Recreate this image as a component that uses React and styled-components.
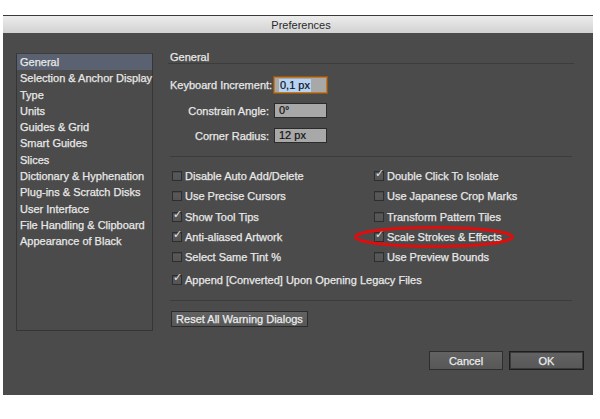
import React from "react";
import styled, { createGlobalStyle } from "styled-components";

const GlobalStyle = createGlobalStyle`
  body {
    margin: 0;
    background: #ffffff;
    font-family: "Liberation Sans", Arial, sans-serif;
  }
`;

const Window = styled.div`
  margin: 15px 0 0 3px;
  width: 590px;
  height: 380px;
  background: #4b4b4b;
  display: flex;
  flex-direction: column;
  -webkit-text-stroke: 0.25px currentColor;
`;

const TitleBar = styled.div`
  height: 17px;
  border-top: 1px solid #3a3a3a;
  background: linear-gradient(#ececec, #d2d2d2);
  display: flex;
  align-items: center;
  justify-content: center;
  font-size: 11px;
  color: #2a2a2a;
  padding-left: 6px;
  -webkit-text-stroke: 0;
`;

const Body = styled.div`
  flex: 1;
  display: grid;
  grid-template-columns: 137px 1fr;
  grid-template-rows: 278px auto;
  column-gap: 15px;
  row-gap: 20px;
  padding: 20px 9px 0 13px;
`;

const Sidebar = styled.div`
  border: 1px solid #353535;
  border-top-color: #3e3e3e;
  background: #4b4b4b;
  display: flex;
  flex-direction: column;
`;

const NavItem = styled.div`
  height: 16.3px;
  line-height: 16px;
  padding-left: 3px;
  font-size: 11px;
  color: #e8e8e8;
  white-space: nowrap;
  background: ${(p) => (p.$active ? "#5a6271" : "transparent")};
`;

const Main = styled.div`
  display: flex;
  flex-direction: column;
`;

const Heading = styled.div`
  font-size: 11px;
  color: #e8e8e8;
  padding: 0 0 3px 2px;
  height: 7px;
  line-height: 8px;
  border-bottom: 1px solid #3c3c3c;
  width: 404px;
  margin-bottom: 13px;
`;

const Fields = styled.div`
  display: grid;
  grid-template-columns: 99px 53px;
  column-gap: 5px;
  row-gap: 10px;
  padding-left: 2px;
  align-items: center;
`;

const Label = styled.div`
  text-align: right;
  font-size: 11px;
  color: #e8e8e8;
  white-space: nowrap;
`;

const Input = styled.div`
  height: ${(p) => (p.$focus ? "14px" : "13px")};
  box-sizing: content-box;
  background: #a8a8a8;
  border: 1px solid ${(p) => (p.$focus ? "#c27a2a" : "#2b2b2b")};
  box-shadow: ${(p) => (p.$focus ? "0 0 0 1px #8a5a22" : "none")};
  font-size: 11px;
  line-height: 13px;
  color: #111;
  -webkit-text-stroke: 0.2px #111;
  padding-left: 4px;
  display: flex;
  align-items: center;
`;

const Selected = styled.span`
  background: #b6d3f5;
  padding: 0 1px;
`;

const Separator = styled.div`
  width: 402px;
  margin-left: 2px;
  height: 0;
  border-top: 1px solid #3c3c3c;
  margin-top: ${(p) => p.$top || 0}px;
  margin-bottom: ${(p) => p.$bottom || 0}px;
`;

const Checks = styled.div`
  display: grid;
  grid-template-columns: 202px 202px;
  grid-auto-rows: 20.3px;
  padding-left: 4px;
`;

const CheckRow = styled.div`
  position: relative;
  display: flex;
  align-items: center;
  gap: 3px;
  font-size: 11px;
  color: #e8e8e8;
  white-space: nowrap;
  grid-column: ${(p) => (p.$wide ? "1 / span 2" : "auto")};
  margin-top: ${(p) => p.$top || 0}px;
`;

const Box = styled.span`
  position: relative;
  width: 8px;
  height: 8px;
  border: 1px solid #2e2e2e;
  background: linear-gradient(#595959, #545454);
  box-shadow: inset 0 1px 0 #4a4a4a;
  flex-shrink: 0;
`;

const Tick = styled.span`
  position: absolute;
  left: 0px;
  top: -4px;
  font-family: "DejaVu Sans", sans-serif;
  font-size: 11px;
  line-height: 11px;
  color: #e6e6e6;
  -webkit-text-stroke: 0;
`;

const Ellipse = styled.svg`
  position: absolute;
  left: -20px;
  top: -1px;
  overflow: visible;
`;

const ResetButton = styled.div`
  width: 135px;
  height: 14px;
  margin-left: 3px;
  border: 1px solid #2c2c2c;
  background: linear-gradient(#626262, #575757);
  font-size: 11px;
  color: #ececec;
  display: flex;
  align-items: center;
  justify-content: center;
`;

const Footer = styled.div`
  grid-column: 1 / span 2;
  display: flex;
  justify-content: flex-end;
  gap: 6px;
`;

const Button = styled.div`
  width: ${(p) => p.$w}px;
  height: 17px;
  border: 1px solid ${(p) => (p.$default ? "#1e1e1e" : "#2e2e2e")};
  box-shadow: ${(p) => (p.$default ? "inset 0 0 0 1px #3a3a3a" : "none")};
  background: linear-gradient(#636363, #575757);
  font-size: 11px;
  color: #ececec;
  display: flex;
  align-items: center;
  justify-content: center;
`;

const navItems = [
  "General",
  "Selection & Anchor Display",
  "Type",
  "Units",
  "Guides & Grid",
  "Smart Guides",
  "Slices",
  "Dictionary & Hyphenation",
  "Plug-ins & Scratch Disks",
  "User Interface",
  "File Handling & Clipboard",
  "Appearance of Black",
];

const checks = [
  ["Disable Auto Add/Delete", false],
  ["Double Click To Isolate", true],
  ["Use Precise Cursors", false],
  ["Use Japanese Crop Marks", false],
  ["Show Tool Tips", true],
  ["Transform Pattern Tiles", false],
  ["Anti-aliased Artwork", true],
  ["Scale Strokes & Effects", true, true],
  ["Select Same Tint %", false],
  ["Use Preview Bounds", false],
];

const Check = ({ label, checked, circled, wide, top }) => (
  <CheckRow $wide={wide} $top={top}>
    <Box>{checked && <Tick>✓</Tick>}</Box>
    {label}
    {circled && (
      <Ellipse width="160" height="22" viewBox="0 0 160 22">
        <ellipse cx="80" cy="11" rx="78.5" ry="9.5" fill="none" stroke="#e00d0d" strokeWidth="3" />
      </Ellipse>
    )}
  </CheckRow>
);

export default function App() {
  return (
    <>
      <GlobalStyle />
      <Window>
        <TitleBar>Preferences</TitleBar>
        <Body>
          <Sidebar>
            {navItems.map((item, i) => (
              <NavItem key={item} $active={i === 0}>
                {item}
              </NavItem>
            ))}
          </Sidebar>
          <Main>
            <Heading>General</Heading>
            <Fields>
              <Label>Keyboard Increment:</Label>
              <Input $focus>
                <Selected>0,1 px</Selected>
              </Input>
              <Label>Constrain Angle:</Label>
              <Input>0°</Input>
              <Label>Corner Radius:</Label>
              <Input>12 px</Input>
            </Fields>
            <Separator $top={13} $bottom={9} />
            <Checks>
              {checks.map(([label, checked, circled]) => (
                <Check key={label} label={label} checked={checked} circled={circled} />
              ))}
              <Check label="Append [Converted] Upon Opening Legacy Files" checked wide top={5} />
            </Checks>
            <Separator $top={12} $bottom={10} />
            <ResetButton>Reset All Warning Dialogs</ResetButton>
          </Main>
          <Footer>
            <Button $w={72}>Cancel</Button>
            <Button $w={73} $default>
              OK
            </Button>
          </Footer>
        </Body>
      </Window>
    </>
  );
}
